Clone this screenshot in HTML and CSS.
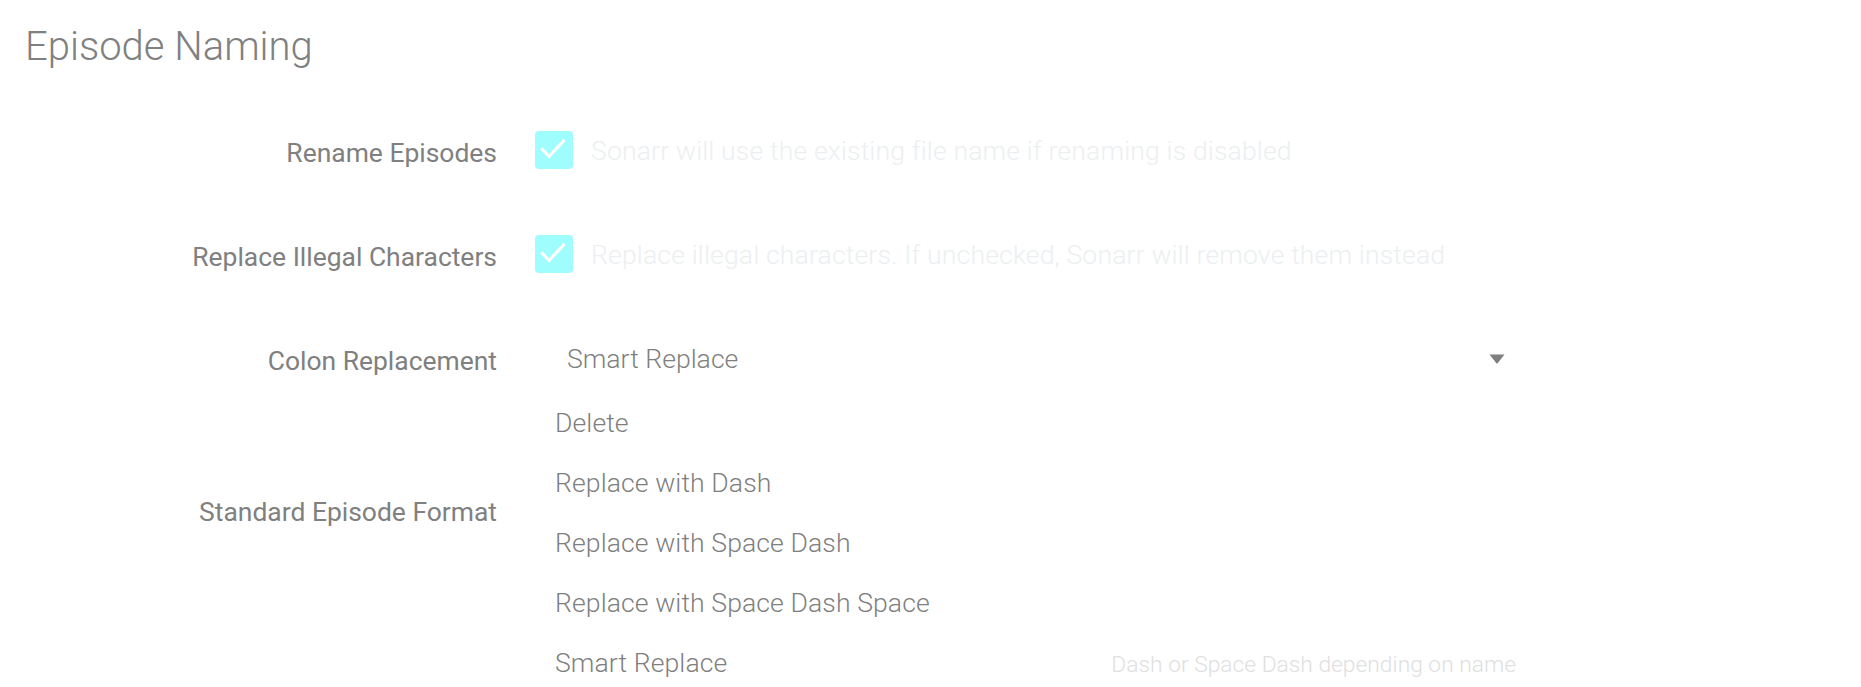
FILE: index.html
```html
<!DOCTYPE html>
<html lang="en">
<head>
<meta charset="utf-8">
<title>Episode Naming</title>
<link rel="stylesheet" href="styles.css">
</head>
<body>
<div class="page">
  <h1 class="title">Episode Naming</h1>
  <div class="form">
    <div class="row">
      <label class="label">Rename Episodes</label>
      <div class="field">
        <span class="checkbox">
          <svg viewBox="0 0 38 38" width="38" height="38"><path d="M7.5 18.5 L14 25.5 L28.5 10" fill="none" stroke="#ffffff" stroke-width="3.2" stroke-linecap="square" stroke-linejoin="miter"/></svg>
        </span>
        <span class="help">Sonarr will use the existing file name if renaming is disabled</span>
      </div>
    </div>
    <div class="row">
      <label class="label">Replace Illegal Characters</label>
      <div class="field">
        <span class="checkbox">
          <svg viewBox="0 0 38 38" width="38" height="38"><path d="M7.5 18.5 L14 25.5 L28.5 10" fill="none" stroke="#ffffff" stroke-width="3.2" stroke-linecap="square" stroke-linejoin="miter"/></svg>
        </span>
        <span class="help">Replace illegal characters. If unchecked, Sonarr will remove them instead</span>
      </div>
    </div>
    <div class="row row-select">
      <label class="label">Colon Replacement</label>
      <div class="field">
        <div class="select">
          <span class="select-value">Smart Replace</span>
          <svg class="arrow" viewBox="0 0 16 10" width="16" height="10"><path d="M0.5 0.5 L15.5 0.5 L8.6 9.2 Q8 9.8 7.4 9.2 Z" fill="#7f7f7f"/></svg>
          <ul class="menu">
            <li class="option">Delete</li>
            <li class="option">Replace with Dash</li>
            <li class="option">Replace with Space Dash</li>
            <li class="option">Replace with Space Dash Space</li>
            <li class="option">Smart Replace<span class="hint">Dash or Space Dash depending on name</span></li>
          </ul>
        </div>
      </div>
    </div>
    <div class="row">
      <label class="label">Standard Episode Format</label>
      <div class="field"></div>
    </div>
  </div>
</div>
</body>
</html>
```

FILE: styles.css
```css
html {
  overflow: hidden;
  background: #ffffff;
}

body {
  margin: 0;
  padding: 0;
  min-height: 100vh;
  font-family: Roboto, "Liberation Sans", sans-serif;
  font-size: 26.6px;
  color: #808080;
}

.page {
  padding: 23px 0 0 0;
}

.title {
  margin: 0;
  padding-left: 25px;
  font-size: 40px;
  font-weight: 300;
  line-height: 48px;
  color: #808080;
}

.form {
  margin-top: 60px;
}

.row {
  display: grid;
  grid-template-columns: 497px 1fr;
  column-gap: 38px;
  align-items: start;
  margin-bottom: 60px;
}

.row-select {
  margin-bottom: 107px;
}

.label {
  text-align: right;
  font-size: 26.45px;
  font-weight: 400;
  line-height: 44px;
  color: #808080;
}

.field {
  display: flex;
  align-items: flex-start;
  min-height: 40px;
}

.checkbox {
  flex: none;
  width: 38px;
  height: 38px;
  border-radius: 4px;
  background: #a0fdfe;
  display: flex;
}

.help {
  margin-left: 18px;
  font-weight: 300;
  line-height: 40px;
  letter-spacing: 0.14px;
  color: #eceff1;
  white-space: nowrap;
}

.select {
  position: relative;
  display: flex;
  align-items: center;
  justify-content: space-between;
  width: 995px;
  height: 40px;
  box-sizing: border-box;
  padding: 0 25px 0 32px;
}

.select-value {
  font-weight: 300;
  line-height: 40px;
  color: #7f7f7f;
}

.arrow {
  display: block;
  margin-top: -1px;
}

.menu {
  position: absolute;
  top: 54px;
  left: 0;
  right: 0;
  margin: 0;
  padding: 0;
  list-style: none;
  background: #ffffff;
  z-index: 2;
}

.option {
  display: flex;
  align-items: baseline;
  height: 60px;
  line-height: 60px;
  padding: 0 14px 0 20px;
  font-weight: 300;
  letter-spacing: 0.08px;
  color: #7f7f7f;
  white-space: nowrap;
}

.hint {
  margin-left: auto;
  font-size: 22.8px;
  font-weight: 300;
  letter-spacing: 0;
  color: #e0e0e0;
}
```
